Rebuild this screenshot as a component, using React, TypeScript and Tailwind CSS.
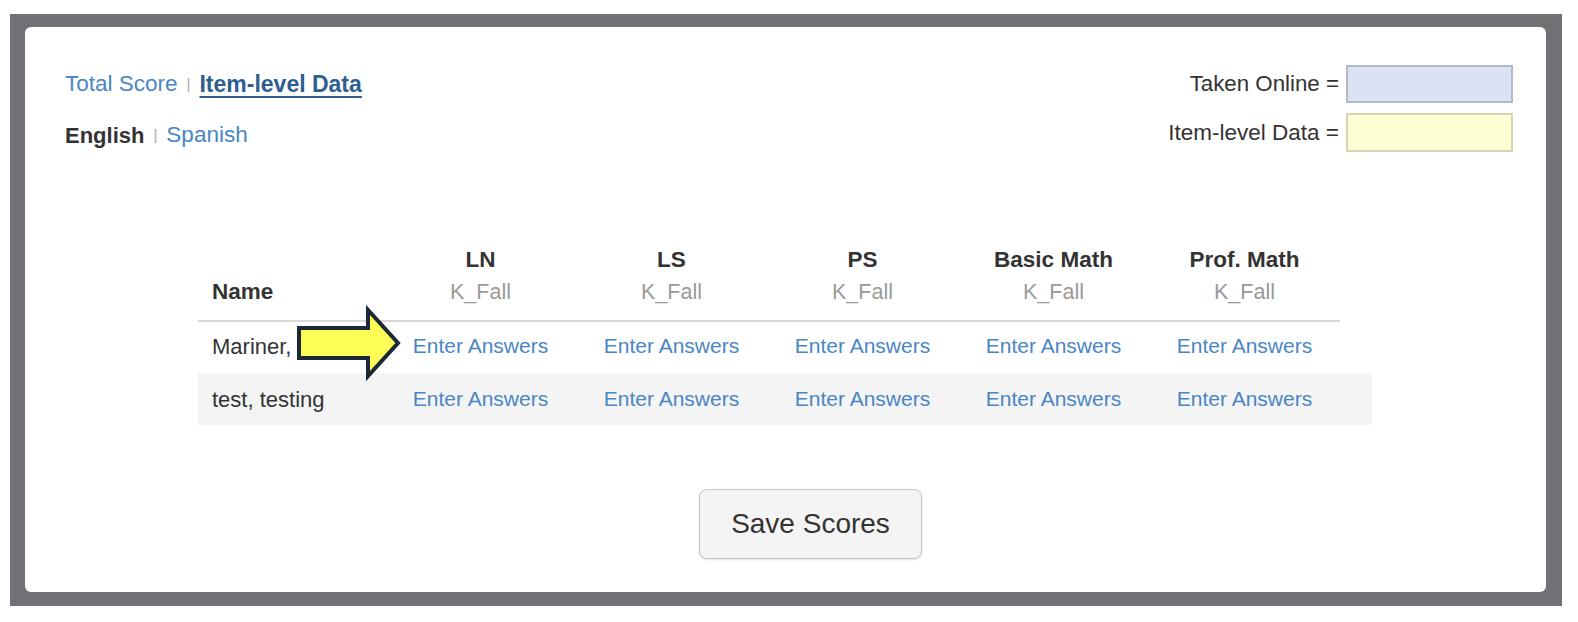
import React from "react";

const cols = ["LN", "LS", "PS", "Basic Math", "Prof. Math"];
const rows = ["Mariner,", "test, testing"];

function Arrow() {
  return (
    <svg width="112" height="78" viewBox="0 0 112 78" className="absolute left-[295px] top-[305px]">
      <polygon
        points="4,23 73,23 73,5 103,38 73,71 73,53 4,53"
        fill="#fdfd55"
        stroke="#1b2838"
        strokeWidth="4"
        strokeLinejoin="miter"
      />
    </svg>
  );
}

export default function App() {
  return (
    <div
      className="relative w-[1578px] h-[622px] bg-white pl-[10px] pt-[14px]"
      style={{ fontFamily: '"Liberation Sans", Arial, Helvetica, sans-serif' }}
    >
      <div className="w-[1552px] h-[592px] bg-[#717175] pt-[13px] pl-[15px] pr-[16px] pb-[14px]">
        <div className="w-[1521px] h-[565px] bg-white rounded-[6px] pt-[38px]">
          {/* top section */}
          <div className="flex justify-between pl-[40px] pr-[33px]">
            <div className="flex flex-col gap-[13px]">
              <div className="h-[38px] flex items-center text-[22.5px]">
                <span className="text-[#4a86c4]">Total Score</span>
                <span className="mx-[9px] text-[15px] text-[#aaa] self-end mb-[8px]">|</span>
                <span className="text-[#2d5e90] font-bold underline decoration-[2px] underline-offset-[4px] text-[23px]">
                  Item-level Data
                </span>
              </div>
              <div className="h-[38px] flex items-center text-[22px]">
                <span className="text-[#333] font-bold">English</span>
                <span className="mx-[9px] text-[15px] text-[#aaa] self-end mb-[8px]">|</span>
                <span className="text-[#4a86c4] text-[22.5px]">Spanish</span>
              </div>
            </div>
            <div className="flex flex-col gap-[10px]">
              <div className="h-[38px] flex items-center justify-end text-[22.3px] text-[#333]">
                <span>Taken Online =</span>
                <div className="ml-[7px] w-[167px] h-[38px] bg-[#dbe2f4] border-2 border-[#b3bacb]" />
              </div>
              <div className="h-[39px] flex items-center justify-end text-[22.5px] text-[#333]">
                <span>Item-level Data =</span>
                <div className="ml-[7px] w-[167px] h-[39px] bg-[#fefed4] border-2 border-[#d6d6ae]" />
              </div>
            </div>
          </div>

          {/* table */}
          <table className="ml-[173px] mt-[84px] border-collapse text-[#333]">
            <thead>
              <tr>
                <th className="w-[187px] pl-[14px] pt-[6px] pb-[12px] text-left align-bottom border-b-2 border-[#d8d8d8] text-[22.5px] font-bold leading-[32px]">
                  Name
                </th>
                {cols.map((c) => (
                  <th
                    key={c}
                    className="w-[191px] pt-[6px] pb-[12px] text-center align-bottom border-b-2 border-[#d8d8d8] leading-[32px]"
                  >
                    <div className="text-[22.5px] font-bold">{c}</div>
                    <div className="text-[21.5px] font-normal text-[#999]">K_Fall</div>
                  </th>
                ))}
                <th className="w-[32px]" />
              </tr>
            </thead>
            <tbody>
              {rows.map((r, i) => (
                <tr key={r} className={i % 2 === 1 ? "bg-[#f4f4f4]" : ""}>
                  <td className={`h-[52px] pl-[14px] text-left text-[22px] align-middle ${i === 0 ? "pb-[3px]" : ""}`}>{r}</td>
                  {cols.map((c) => (
                    <td
                      key={c}
                      className={`h-[52px] text-center text-[21px] text-[#4a86c4] align-middle ${i === 0 ? "pb-[3px]" : ""}`}
                    >
                      Enter Answers
                    </td>
                  ))}
                  <td />
                </tr>
              ))}
            </tbody>
          </table>

          {/* button */}
          <div className="flex justify-center pl-[50px] mt-[64px]">
            <button className="w-[223px] h-[70px] bg-[#f4f4f4] border border-[#c6c6c6] rounded-[8px] text-[28px] text-[#333] shadow-[0_1px_2px_rgba(0,0,0,0.12)]">
              Save Scores
            </button>
          </div>
        </div>
      </div>
      <Arrow />
    </div>
  );
}
